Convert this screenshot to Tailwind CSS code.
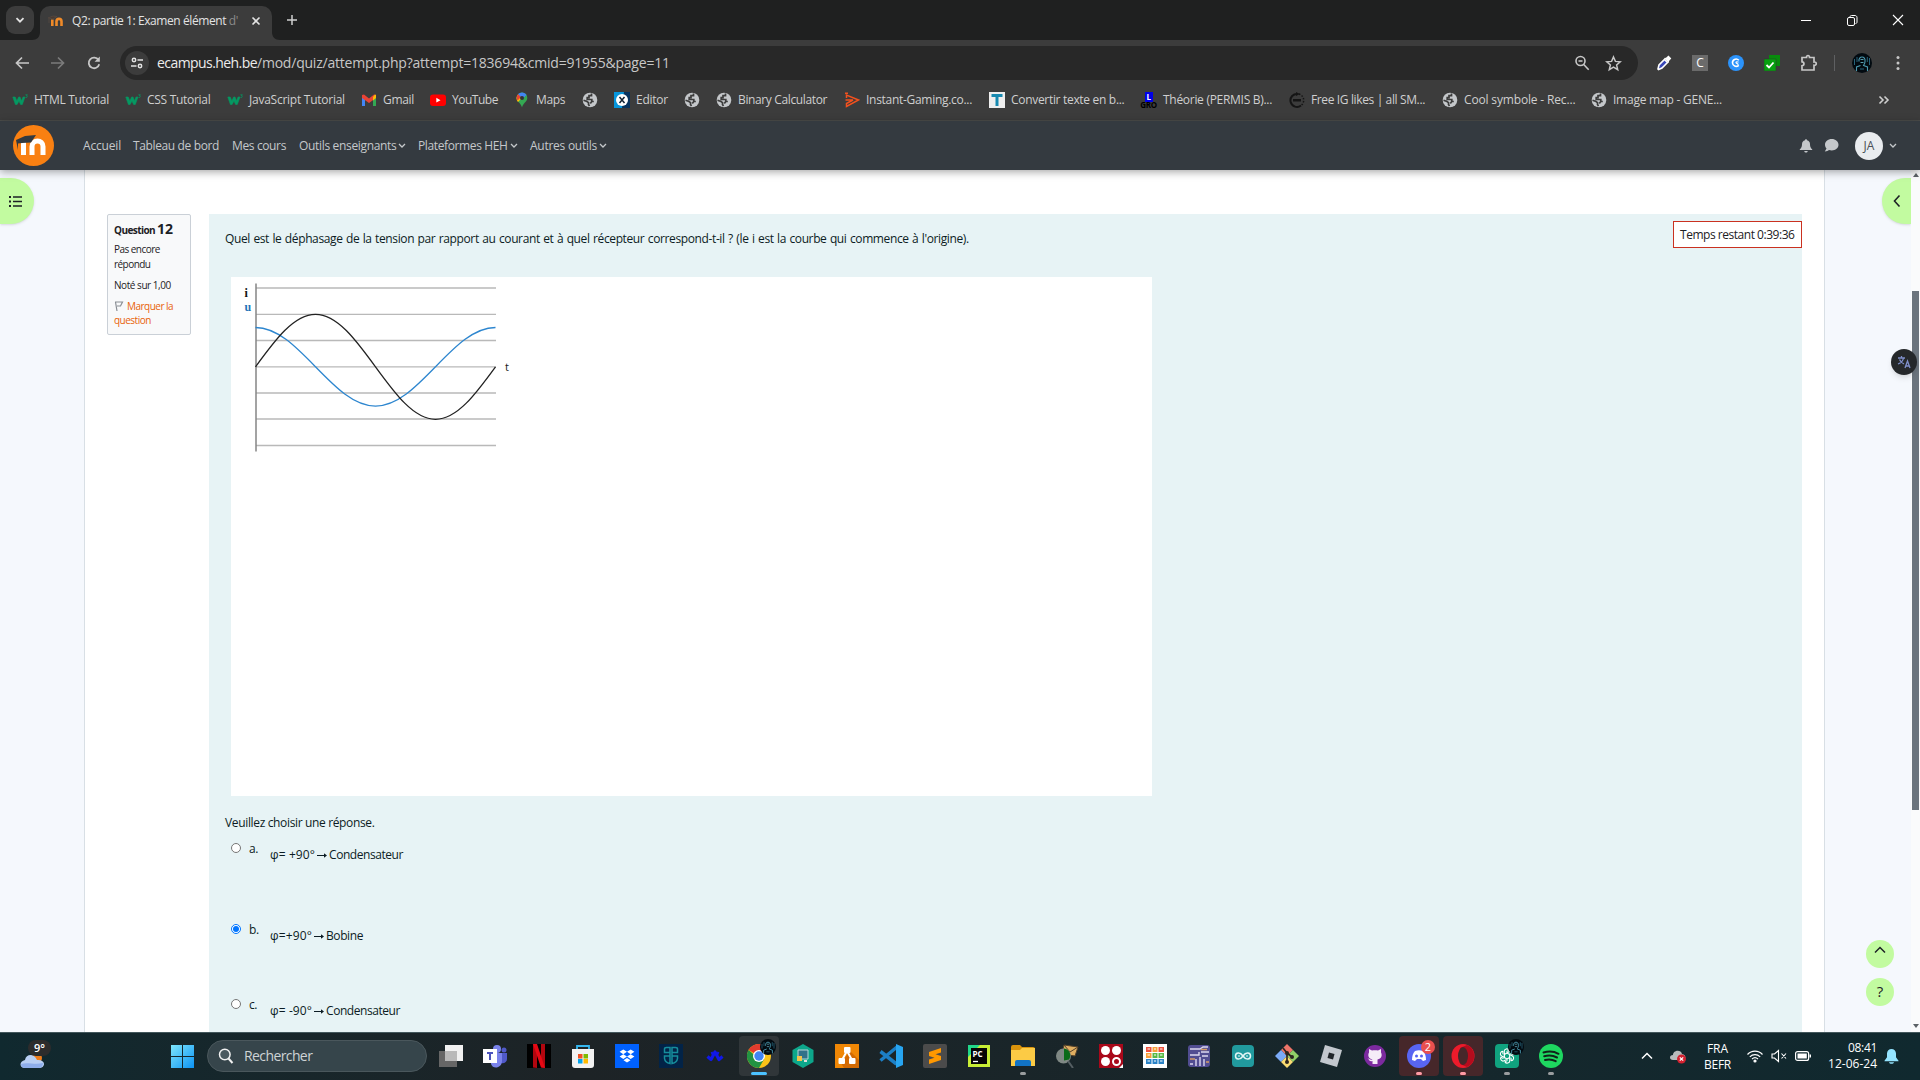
<!DOCTYPE html>
<html lang="fr">
<head>
<meta charset="utf-8">
<title>Q2: partie 1: Examen élément d'</title>
<script src="https://cdn.jsdelivr.net/npm/@tailwindcss/browser@4"></script>
</head>
<body class="flex h-[1080px] w-[1920px] flex-col overflow-hidden bg-white font-['Open_Sans','Noto_Sans',sans-serif] text-[12px] leading-4 whitespace-nowrap text-[#1d2125]">

<svg class="hidden">
  <symbol id="globe" viewBox="0 0 16 16"><circle cx="8" cy="8" r="7.3" fill="#c4c7ca"/><path d="M9.500 1.500v2.200H7v2H5.200v1.800h4.600v2h2M1.500 8.300 5 9.500l1.500 1.200v1.800l1 1.500M9.800 9.500l-1.500 2" fill="none" stroke="#3c3c3c" stroke-width="1.700"/></symbol>
  <symbol id="w3" viewBox="0 0 16 16"><path d="M.8 5h2.400l1.700 4L6.600 5H8l1.600 4L11 5h2L10.300 12.500H8.600L7 9l-1.900 3.500H3.400z" fill="#059862" stroke="#059862" stroke-width=".6"/><path d="M13.400 2.800h2l-1 1.200c1.500 0 1.300 1.900-.8 1.500" fill="none" stroke="#059862" stroke-width=".8"/></symbol>
  <symbol id="down" viewBox="0 0 8 8"><path d="m1 2 3 3 3-3" fill="none" stroke="currentColor" stroke-width="1.300"/></symbol>
  <symbol id="arrow" viewBox="0 0 12 8"><path d="M1 4.500h9" stroke="currentColor" fill="none"/><path d="M8 2.200 11 4.500 8 6.800z" fill="currentColor"/></symbol>
  <symbol id="avatar" viewBox="0 0 20 20"><circle cx="10" cy="10" r="10" fill="#020a10"/><path d="M7 8.500c-1-6 7-6 6 0 0 2-1 3-1.500 4l4 1.500v4M8.500 12.500l-4 1.500v4" fill="none" stroke="#4b9ab0" stroke-width="1.100"/><path d="M8.500 6.500h3M8.500 9.500h3" stroke="#6fc0d4" stroke-width=".8"/><path d="M2.500 6v6M17.500 5v7M5 4v5M15.300 4v5M8 16h4" stroke="#28637a" stroke-width="1"/></symbol>
</svg>

<!-- Tab strip -->
<header class="flex h-10 shrink-0 items-end bg-[#1f2020] text-[#e3e3e3]">
  <div class="mb-1.5 ml-1.5 flex size-7 items-center justify-center rounded-[9px] bg-[#3c3c3c]"><svg class="size-3.5" viewBox="0 0 14 14"><path d="m3.500 5.200 3.500 3.500 3.500-3.500" fill="none" stroke="#e3e3e3" stroke-width="1.800"/></svg></div>
  <div class="relative ml-1.5 flex h-[34px] w-[232px] items-center rounded-t-[10px] bg-[#3c3c3c] pb-[5px] pl-2">
    <svg class="size-4" viewBox="0 0 16 16"><path d="M4.300 13V6.500M8.500 13V8.500c0-3.500 5-3.500 5 0V13" fill="none" stroke="#ef8a29" stroke-width="2.600"/><path d="M0 5 5 3l4 .5-4 2.500zM1 6v4" fill="#4a3a30" stroke="#564a42" stroke-width=".8"/></svg>
    <span class="ml-2 w-[169px] overflow-hidden tracking-[-0.41px]">Q2: partie 1: Examen élément <span class="text-[#8a8a8a]">d'</span></span>
    <svg class="ml-[9px] size-3" viewBox="0 0 12 12"><path d="m2.500 2.500 7 7m0-7-7 7" stroke="#e3e3e3" stroke-width="1.600"/></svg>
    <svg class="absolute bottom-0 -left-2 size-2" viewBox="0 0 8 8"><path d="M8 0v8H0c5 0 8-3 8-8z" fill="#3c3c3c"/></svg>
    <svg class="absolute -right-2 bottom-0 size-2" viewBox="0 0 8 8"><path d="M0 0v8h8C3 8 0 5 0 0z" fill="#3c3c3c"/></svg>
  </div>
  <svg class="mb-3.5 ml-3.5 size-3" viewBox="0 0 12 12"><path d="M6 1v10M1 6h10" stroke="#cfcfcf" stroke-width="1.500"/></svg>
  <div class="mr-4 mb-3.5 ml-auto flex items-center gap-[34px] text-white">
    <svg class="size-3" viewBox="0 0 12 12"><path d="M1 6.500h10" stroke="currentColor"/></svg>
    <svg class="size-3" viewBox="0 0 12 12" fill="none" stroke="currentColor"><rect x="1.500" y="3.500" width="7" height="8" rx="1.500"/><path d="M4 3c0-1 .5-1.500 1.500-1.500H9c1 0 2 .8 2 2V8c0 1-.6 1.500-1.500 1.500"/></svg>
    <svg class="size-3" viewBox="0 0 12 12"><path d="m1 1 10 10m0-10L1 11" stroke="currentColor" stroke-width="1.100"/></svg>
  </div>
</header>

<!-- Address bar -->
<div class="flex h-[46px] shrink-0 items-center bg-[#3c3c3c] text-[#c7c7c7]">
  <svg class="ml-3.5 size-4" viewBox="0 0 16 16"><path d="M15 8H2.500M8 2.500 2.500 8 8 13.500" fill="none" stroke="currentColor" stroke-width="1.700"/></svg>
  <svg class="ml-5 size-4 text-[#7b7b7b]" viewBox="0 0 16 16"><path d="M1 8h12.500M8 2.500 13.500 8 8 13.500" fill="none" stroke="currentColor" stroke-width="1.700"/></svg>
  <svg class="ml-5 size-4" viewBox="0 0 16 16"><path d="M13.200 9.200A5.300 5.300 0 1 1 12.500 5" fill="none" stroke="currentColor" stroke-width="1.800"/><path d="M13.800 1.500v5.200H8.600z" fill="currentColor"/></svg>
  <div class="ml-[18px] flex h-[34px] w-[1518px] items-center rounded-full bg-[#282828] pl-[5px] text-[14px]">
    <div class="flex size-6 items-center justify-center rounded-full bg-[#3c3c3c]"><svg class="size-[14px]" viewBox="0 0 14 14" fill="none" stroke="#e3e3e3" stroke-width="1.500"><circle cx="4" cy="4" r="1.700"/><path d="M7.500 4H13M1 10h5.500"/><circle cx="10" cy="10" r="1.700"/></svg></div>
    <span class="ml-2 tracking-[-0.57px] text-[#ececec]">ecampus.heh.be</span><span class="tracking-[-0.21px]">/mod/quiz/attempt.php?attempt=183694&amp;cmid=91955&amp;page=11</span>
    <svg class="ml-auto size-4" viewBox="0 0 16 16" fill="none" stroke="currentColor" stroke-width="1.600"><circle cx="6.500" cy="6" r="4.500"/><path d="m9.700 9.500 5 5.200M4.500 6h4"/></svg>
    <svg class="mr-4 ml-[15px] size-[17px]" viewBox="0 0 17 17"><path d="m8.500 2 1.900 4.400 4.800.4-3.600 3.200 1.100 4.700-4.200-2.500-4.200 2.500L5.400 10 1.800 6.800l4.800-.4z" fill="none" stroke="currentColor" stroke-width="1.500"/></svg>
  </div>
  <svg class="ml-[18px] size-4" viewBox="0 0 16 16"><path d="m2 14 1-4 5.500-5.500 3 3L6 13l-3.500 1.500z" fill="#3847b8" stroke="#fff" stroke-width="1.600"/><path d="m8 3 2-.2L12.500.6l2.800 2.800L13 6l-.2 2z" fill="#fff"/></svg>
  <div class="ml-5 flex size-4 items-center justify-center bg-[#6b6b6b] text-[12px] text-white">C</div>
  <svg class="ml-5 size-4" viewBox="0 0 16 16"><circle cx="8" cy="8" r="8" fill="#2b93fb"/><path d="M10.800 5.300C8 2.500 4.200 5 4.500 8s3.500 4.500 6.300 2.300" fill="none" stroke="#fff" stroke-width="1.600"/><path d="M10.500 7.300C8.500 6 7.200 7.500 8.500 8.200s2 .8 1.300 2" fill="none" stroke="#fff" stroke-width="1.100"/></svg>
  <svg class="ml-5 size-4" viewBox="0 0 16 16"><path d="M5 0h11v11H5z" fill="#078b0c"/><path d="M0 4h12v12H0z" fill="#07a010" stroke="#2b3a2b" stroke-width=".5"/><path d="m2.500 10 2.500 2.500 4.500-5" fill="none" stroke="#fff" stroke-width="1.800"/></svg>
  <svg class="ml-5 size-[18px]" viewBox="0 0 18 18"><path d="M2 3.500h4.500c-.3-2.600 3.300-2.600 3 0h4.500v4.500c3-.3 3 3.600 0 3.300V16H2v-4.200c2.600-.2 2.600-3.800 0-4z" fill="none" stroke="currentColor" stroke-width="1.700"/></svg>
  <div class="ml-4 h-4 w-px bg-[#5f6062]"></div>
  <svg class="ml-[17px] size-5"><use href="#avatar"/></svg>
  <svg class="ml-[18px] size-4" viewBox="0 0 16 16" fill="currentColor"><circle cx="8" cy="2.500" r="1.500"/><circle cx="8" cy="8" r="1.500"/><circle cx="8" cy="13.500" r="1.500"/></svg>
</div>

<!-- Bookmarks -->
<nav class="flex h-[35px] shrink-0 items-center border-b border-[#4b4c4a] bg-[#3c3c3c] pb-1.5 pl-3 text-[#cfcfcf] [&>div]:flex [&>div]:shrink-0 [&>div]:items-center [&>div]:gap-1.5 [&_svg]:size-4 [&_svg]:shrink-0">
  <div class="w-[113px] tracking-[-0.29px]"><svg><use href="#w3"/></svg>HTML Tutorial</div>
  <div class="w-[102px] tracking-[-0.29px]"><svg><use href="#w3"/></svg>CSS Tutorial</div>
  <div class="w-[134px] tracking-[-0.25px]"><svg><use href="#w3"/></svg>JavaScript Tutorial</div>
  <div class="w-[69px] tracking-[-0.31px]"><svg viewBox="0 0 16 16"><path d="M1 3v11h3V7z" fill="#4285f4"/><path d="M15 3v11h-3V7z" fill="#34a853"/><path d="m1 3 2-.5 5 4 5-4 2 .5v3L8 11 1 6z" fill="#ea4335"/><path d="m12 5 2-2.500 1 .5v3l-3 2.500z" fill="#fbbc04"/></svg>Gmail</div>
  <div class="w-[84px] tracking-[-0.48px]"><svg viewBox="0 0 16 16"><rect y="2.500" width="16" height="11.500" rx="3" fill="#f00"/><path d="m6.300 5.800 4.200 2.400-4.200 2.400z" fill="#fff"/></svg>YouTube</div>
  <div class="w-[68px] tracking-[-0.38px]"><svg viewBox="0 0 16 16"><path d="M8 .5a5.500 5.500 0 0 0-5.300 5.500C2.700 10 7 11 8 15.500 9 11 13.300 10 13.300 6A5.300 5.300 0 0 0 8 .5z" fill="#34a853"/><path d="M4 2.500 11.500 2 8 6 4 10C1.500 7 2.500 4 4 2.500z" fill="#fbbc04"/><path d="M8 .5c2 0 3.500 1 4.500 2.500L8 7.500 4 2.300C5 1.200 6.500.5 8 .5z" fill="#4285f4"/><path d="M4 2.300 7 5 3.500 8.500C2.300 6 2.800 3.800 4 2.300z" fill="#ea4335"/><circle cx="8" cy="5.900" r="2" fill="#333"/></svg>Maps</div>
  <div class="w-8"><svg><use href="#globe"/></svg></div>
  <div class="w-[70px] tracking-[-0.24px]"><svg viewBox="0 0 16 16"><path d="M0 0h16v16H0z" fill="#0796dc"/><path d="M10 0h6v16H8z" fill="#07335f"/><circle cx="8" cy="8" r="6" fill="#fff"/><path d="m5.500 5 5 6m0-6-5 6" stroke="#123" stroke-width="1.500"/></svg>Editor</div>
  <div class="w-8"><svg><use href="#globe"/></svg></div>
  <div class="w-[128px] tracking-[-0.37px]"><svg><use href="#globe"/></svg>Binary Calculator</div>
  <div class="w-[145px] tracking-[-0.29px]"><svg viewBox="0 0 16 16"><path d="M2.500 6V3l12 5L2.500 14.500v-3L9 8H1.500" fill="none" stroke="#f4511e" stroke-width="1.500"/><path d="M1 .5h3v1.500H1z" fill="#f4511e"/></svg>Instant-Gaming.co...</div>
  <div class="w-[151px] tracking-[-0.31px]"><svg viewBox="0 0 16 16"><path d="M0 0h16v16H0z" fill="#eee"/><path d="M2.500 3.500h11M8 3.500v10.500" stroke="#1789b0" stroke-width="3"/></svg>Convertir texte en b...</div>
  <div class="w-[149px] tracking-[-0.29px]"><span class="flex h-4 w-[17px] flex-col items-center font-bold"><span class="h-[10px] w-2 bg-[#0000e8] text-center text-[8px] leading-[10px] text-white">L</span><span class="text-[8px] leading-[6px] text-black">GRO</span></span>Théorie (PERMIS B)...</div>
  <div class="w-[153px] tracking-[-0.37px]"><svg viewBox="0 0 16 16"><path d="M9 2a6.500 6.500 0 1 0 3 11.500" fill="none" stroke="#151515" stroke-width="2"/><path d="M10 2a6.500 6.500 0 0 1 2 11.500" fill="none" stroke="#151515" stroke-width="1.500" stroke-dasharray="1.500 1.500"/><path d="m7 0 4 2-4 2zM4 7h8v2.500H4z" fill="#151515"/></svg>Free IG likes | all SM...</div>
  <div class="w-[149px] tracking-[-0.16px]"><svg><use href="#globe"/></svg>Cool symbole - Rec...</div>
  <div class="w-[286px] tracking-[-0.23px]"><svg><use href="#globe"/></svg>Image map - GENE...</div>
  <div><svg viewBox="0 0 16 16"><path d="m2.500 4.500 3.500 3.500-3.500 3.500m5-7L11 8l-3.500 3.500" fill="none" stroke="currentColor" stroke-width="1.600"/></svg></div>
</nav>

<!-- Site navigation -->
<nav class="z-10 flex h-[49px] shrink-0 items-center bg-[#343a40] pl-[13px] text-[#c5c8cb] shadow-[0_2px_8px_rgba(0,0,0,0.35)] [&_svg.c]:size-2">
  <svg class="size-[41px]" viewBox="0 0 41 41"><circle cx="20.500" cy="20.500" r="20.500" fill="#f98012"/><path d="M10.500 30V17M19 30v-8.500c0-7.500 11-7.500 11 0V30" fill="none" stroke="#fff" stroke-width="5"/><path d="m3 15 9-4 11-1-5 7.500-9 .5-4 .5v6.500z" fill="#333a40"/></svg>
  <span class="ml-[29px] w-[50px] tracking-[-0.18px]">Accueil</span>
  <span class="w-[99px] tracking-[-0.37px]">Tableau de bord</span>
  <span class="w-[67px] tracking-[-0.37px]">Mes cours</span>
  <span class="w-[99px] tracking-[-0.33px]">Outils enseignants</span><svg class="c"><use href="#down"/></svg>
  <span class="ml-3 w-[92px] tracking-[-0.38px]">Plateformes HEH</span><svg class="c"><use href="#down"/></svg>
  <span class="ml-3 w-[69px] tracking-[-0.26px]">Autres outils</span><svg class="c"><use href="#down"/></svg>
  <svg class="ml-auto size-[14px]" viewBox="0 0 14 14" fill="#c5c8cb"><path d="M7 .3c.6 0 1 .4 1 1 2 .5 3 2 3 4 0 2.500.8 4 2.200 5v.7H.8v-.7C2.200 9.300 3 7.800 3 5.300c0-2 1-3.500 3-4 0-.6.400-1 1-1zM5.300 12h3.400c0 2-3.400 2-3.400 0z"/></svg>
  <svg class="ml-[11px] size-[15px]" viewBox="0 0 15 15"><path d="M7.800 1C3.800 1 1 3.500 1 6.700c0 1.500.6 2.800 1.500 3.800L.8 13.500c2 0 3.300-.6 4.200-1.400C10 13.500 14.500 11 14.500 6.800 14.500 3.500 11.500 1 7.800 1z" fill="#c5c8cb"/></svg>
  <div class="ml-4 flex size-7 items-center justify-center rounded-full bg-[#e9ecef] text-[#495057]">JA</div>
  <svg class="mr-[23px] ml-1.5 size-2"><use href="#down"/></svg>
</nav>

<!-- Page -->
<main class="relative flex min-h-0 flex-1 bg-[#f5f8fd]">
  <div class="w-[84px] shrink-0 pt-2">
    <div class="flex h-[46px] w-[34px] items-center rounded-r-full bg-[#c2fba0] pl-2 shadow-sm"><svg class="size-[15px]" viewBox="0 0 15 15"><path d="M5 3h9M5 7.500h9M5 12h9" stroke="#1d2125" stroke-width="1.500"/><path d="M1 3h2M1 7.500h2M1 12h2" stroke="#1d2125" stroke-width="2"/></svg></div>
  </div>
  <div class="flex w-[1741px] shrink-0 items-start overflow-hidden border-x border-[#d8dfe5] bg-white pt-11 pl-[22px]">
    <aside class="flex h-[121px] w-[84px] shrink-0 flex-col rounded-[2px] border border-[#cad0d7] bg-[#f8f9fa] pl-1.5 text-[10px] leading-[15px]">
      <h3 class="mt-1 flex items-baseline leading-[19px] font-bold"><span class="w-[43px] text-[10px] tracking-[-0.57px]">Question</span><span class="text-[14px]">12</span></h3>
      <p class="mt-0.5 tracking-[-0.54px]">Pas encore<br>répondu</p>
      <p class="mt-[6px] tracking-[-0.45px]">Noté sur 1,00</p>
      <p class="mt-[6px] leading-[14px] tracking-[-0.51px] text-[#e8630a]"><svg class="mr-[3px] inline size-2.5 align-[-1px]" viewBox="0 0 10 10"><path d="M1 1h7.500L6.500 5H3M1.500 1l1.500 9" fill="none" stroke="#8a8f94" stroke-width="1.200"/></svg>Marquer la<br>question</p>
    </aside>
    <section class="ml-[18px] h-[830px] w-[1593px] shrink-0 bg-[#e7f3f5] pl-4 text-[#0c1c24]">
      <div class="flex items-start">
        <p class="mt-[17px] tracking-[-0.38px] [word-spacing:0.7px]">Quel est le déphasage de la tension par rapport au courant et à quel récepteur correspond-t-il ? (le i est la courbe qui commence à l'origine).</p>
        <div class="mt-[7px] ml-auto flex h-[27px] w-[129px] items-center border border-[#ca3120] bg-white pl-[6px] tracking-[-0.47px] text-[#1d2125]">Temps restant 0:39:36</div>
      </div>
      <div class="mt-[29px] ml-1.5 h-[519px] w-[921px] bg-white">
        <svg class="h-[200px] w-[320px]" viewBox="0 0 320 200" fill="none">
          <path d="M25 11h240M25 37.300h240M25 63.500h240M25 89.800h240M25 116h240M25 142h240M25 168.500h240" stroke="#b9b9b9" stroke-width="1.300"/>
          <path d="M25 6.500v168" stroke="#858585" stroke-width="1.500"/>
          <path d="M24.500 50.500C46.200 50.500 64.900 69.700 84.500 89.800 104.100 110 122.800 129.100 144.500 129.100 166.200 129.100 184.900 110 204.500 89.800 224.100 69.700 242.800 50.500 264.500 50.500" stroke="#2d86cf" stroke-width="1.300"/>
          <path d="M24.500 89.800C44.100 62.900 62.800 37.300 84.500 37.300 106.200 37.300 124.900 62.900 144.500 89.800 164.100 116.700 182.800 142.300 204.500 142.300 226.200 142.300 244.900 116.700 264.500 89.800" stroke="#222" stroke-width="1.300"/>
          <text x="13.500" y="19.500" fill="#111" class="font-['Liberation_Serif'] text-[12px] font-bold">i</text>
          <text x="13.500" y="34" fill="#1e73b8" class="font-['Liberation_Serif'] text-[12px] font-bold">u</text>
          <text x="274" y="94" fill="#222" class="font-['Open_Sans'] text-[11px]">t</text>
        </svg>
      </div>
      <p class="mt-[19px] tracking-[-0.35px]">Veuillez choisir une réponse.</p>
      <div class="mt-[10px] flex h-[81px] items-start pl-1.5"><div class="mt-0.5 size-[10px] rounded-full border border-[#767676] bg-white"></div><span class="ml-2 w-[21px] tracking-[-0.4px]">a.</span><span class="mt-1.5 flex items-center tracking-[0.1px]">φ= +90°<svg class="mx-px h-2 w-3"><use href="#arrow"/></svg><span class="tracking-[-0.44px]">Condensateur</span></span></div>
      <div class="flex h-[75px] items-start pl-1.5"><div class="mt-0.5 flex size-[10px] items-center justify-center rounded-full border border-[#0075ff] bg-white"><span class="size-1.5 rounded-full bg-[#0075ff]"></span></div><span class="ml-2 w-[21px] tracking-[-0.4px]">b.</span><span class="mt-1.5 flex items-center tracking-[0.14px]">φ=+90°<svg class="mx-px h-2 w-3"><use href="#arrow"/></svg><span class="tracking-[-0.41px]">Bobine</span></span></div>
      <div class="flex h-[24px] items-start pl-1.5"><div class="mt-0.5 size-[10px] rounded-full border border-[#767676] bg-white"></div><span class="ml-2 w-[21px] tracking-[-0.4px]">c.</span><span class="mt-1.5 flex items-center tracking-[0.1px]">φ= -90°<svg class="mx-px h-2 w-3"><use href="#arrow"/></svg><span class="tracking-[-0.44px]">Condensateur</span></span></div>
    </section>
  </div>
  <div class="flex flex-1 flex-col items-end pt-2">
    <div class="flex h-[46px] w-[29px] items-center rounded-l-full bg-[#c2fba0] pl-2.5 shadow-sm"><svg class="h-3.5 w-3" viewBox="0 0 12 14"><path d="M7.500 1.500 2.500 7l5 5.500" fill="none" stroke="#1d2125" stroke-width="1.600"/></svg></div>
    <div class="mt-auto mr-[17px] mb-[26px] flex flex-col gap-[10px] text-[#1d2125]">
      <div class="flex size-7 justify-center rounded-full bg-[#c2fba0] pt-1.5"><svg class="h-[8px] w-3" viewBox="0 0 12 8"><path d="M1 6.500 6 1.500l5 5" fill="none" stroke="currentColor" stroke-width="1.500"/></svg></div>
      <div class="flex size-7 items-center justify-center rounded-full bg-[#c2fba0] pb-0.5 text-[15px] font-medium">?</div>
    </div>
  </div>
  <div class="flex w-[9px] shrink-0 flex-col items-center bg-[#fafbfc]">
    <svg class="mt-[3px] h-1 w-1.5" viewBox="0 0 6 4"><path d="m0 4 3-4 3 4z" fill="#5c6166"/></svg>
    <div class="mt-[114px] h-[519px] w-[7px] bg-[#6b747d]"></div>
    <svg class="mt-auto mb-1 h-1 w-1.5" viewBox="0 0 6 4"><path d="m0 0 3 4 3-4z" fill="#5c6166"/></svg>
  </div>
  <div class="absolute top-[179px] right-[3px] flex size-[26px] items-center justify-center rounded-full bg-[#25282b] shadow-md"><svg class="size-[14px]" viewBox="0 0 14 14" fill="none" stroke="#7f8fca" stroke-width="1.300"><path d="M1 3h7M4.500 1v2M6.500 3c-.5 3-2.500 5-5.500 6M2.500 4.500C3.500 7 5 8 7 9M8 13l2.500-7 2.500 7M9 11h3.200"/></svg></div>
</main>

<!-- Taskbar -->
<footer class="flex h-12 shrink-0 items-center border-t border-[#43575c] bg-linear-to-r from-[#10292f] via-[#1d2326] via-30% to-[#10292f] pb-px text-white">
  <div class="relative ml-5 size-7"><svg class="absolute top-2 left-0 h-5 w-6" viewBox="0 0 24 20"><circle cx="17" cy="8" r="5" fill="#ef7c1a"/><path d="M5 18c-6 0-6-7 0-8 1-6 9-7 12 0 9-1 9 8 2 8z" fill="#b8cff4"/><path d="M1 14c5-2 15 1 22-1 0 3-2 5-4 5H5c-2 0-4-1-4-4z" fill="#8eaeeb"/></svg><span class="absolute -top-[2px] left-2 flex h-4 w-[23px] items-center justify-center rounded-full bg-[#2d2c2c] text-[11px] font-semibold">9°</span></div>
  <svg class="ml-[123px] size-[23px]" viewBox="0 0 23 23"><defs><linearGradient id="win" x2="1" y2="1"><stop stop-color="#7ee6fc"/><stop offset="1" stop-color="#0c93f4"/></linearGradient></defs><path d="M0 0h11v11H0zM12 0h11v11H12zM0 12h11v11H0zM12 12h11v11H12z" fill="url(#win)"/></svg>
  <div class="ml-[13px] flex h-8 w-[220px] items-center rounded-full border border-[#4a575c] bg-[#36454b] pl-[10px] text-[14px] tracking-[-0.6px] text-[#ced3d5]"><svg class="mr-[10px] size-4" viewBox="0 0 16 16"><circle cx="6.800" cy="6.500" r="5.300" fill="#4b5a60" stroke="#f1f1f1" stroke-width="1.500"/><path d="m10.500 10.500 4 4.500" stroke="#f1f1f1" stroke-width="2"/></svg>Rechercher</div>
  <div class="ml-0.5 flex [&>div]:relative [&>div]:mx-0.5 [&>div]:flex [&>div]:h-10 [&>div]:w-10 [&>div]:shrink-0 [&>div]:items-center [&>div]:justify-center [&>div]:rounded [&>div>svg]:size-6">
    <div><svg viewBox="0 0 24 24"><path d="M6 1h18v16H6z" fill="#f1f1f1"/><path d="M0 7h18v16H0z" fill="#666"/><path d="M6 7h12v10H6z" fill="#b9b9b9"/></svg></div>
    <div><svg viewBox="0 0 24 24"><circle cx="14" cy="5" r="4" fill="#7b83eb"/><circle cx="21" cy="6" r="2.500" fill="#5059c9"/><path d="M16 9h8v6c0 3-3 5-6 4z" fill="#5059c9"/><path d="M8 9h11v8c0 7-9 9-11 3z" fill="#7b83eb"/><path d="M0 5h14v14H0z" fill="#fff"/><path d="M4 9h6M7 9v7" stroke="#4b53bc" stroke-width="2"/></svg></div>
    <div><svg viewBox="0 0 24 24"><path d="M0 0h24v24H0z"/><path d="M6 0h4v24l-4-.4zM14 0h4v24l-4-1z" fill="#b1060f"/><path d="M6 0h4l8 24-4-.5z" fill="#e50914"/></svg></div>
    <div><svg viewBox="0 0 24 24"><path d="M6 8V2h12v6" fill="none" stroke="#35b6ee" stroke-width="1.800"/><path d="M1 5h22v16q0 3-3 3H4q-3 0-3-3z" fill="#f2f2f2"/><path d="M7 10h4.500v4.500H7z" fill="#f25022"/><path d="M12.500 10H17v4.500h-4.500z" fill="#7fba00"/><path d="M7 15h4.500v4.500H7z" fill="#00a4ef"/><path d="M12.500 15H17v4.500h-4.500z" fill="#ffb900"/></svg></div>
    <div><svg viewBox="0 0 24 24"><path d="M0 0h24v24H0z" fill="#0061fe"/><path d="m8.300 5.500 3.700 2.300-3.700 2.400-3.700-2.400zm7.400 0 3.700 2.300-3.700 2.400L12 7.800zM8.300 10.200l3.700 2.400L8.300 15l-3.700-2.400zm7.400 0 3.700 2.400-3.700 2.400-3.700-2.400zM12 13.900l3.500 2.300-3.500 2.300-3.500-2.300z" fill="#fff"/></svg></div>
    <div><svg viewBox="0 0 24 24"><path d="M0 0h24v24H0z" fill="#022347"/><path d="M11 8.500H5.500V5q0-1.500 2-1.500H11v16q-5-1-5.500-5V12H11M13 8.500h5.500V5q0-1.500-2-1.500H13v16q5-1 5.500-5V12H13" fill="none" stroke="#168d9c" stroke-width="1.500"/></svg></div>
    <div><svg viewBox="0 0 24 24"><path d="m4.500 12.500 3.500 3 4-7.500 4 7.500 3.500-3" fill="none" stroke="#1018e8" stroke-width="3.200" stroke-linejoin="round"/><path d="m8.500 8 1.500 3M15.500 8 14 11" stroke="#1018e8" stroke-width="2"/></svg></div>
    <div class="bg-[#303639]"><svg viewBox="0 0 24 24"><circle cx="12" cy="12" r="12" fill="#fbc318"/><path d="M12 12 1.600 6a12 12 0 0 1 20.800 0z" fill="#e33b2e"/><path d="M1.600 6A12 12 0 0 0 12 24l5.200-9H12z" fill="#229342"/><circle cx="12" cy="12" r="6" fill="#fff"/><circle cx="12" cy="12" r="4.700" fill="#4285f4"/></svg><span class="absolute top-[3px] right-[3px] size-4"><svg class="size-4"><use href="#avatar"/></svg></span><span class="absolute bottom-px h-[3px] w-4 rounded-full bg-[#4cc2ff]"></span></div>
    <div><svg viewBox="0 0 24 24"><path d="m12 0 10.500 6v12L12 24 1.500 18V6z" fill="#0da78b"/><path d="M7 6h10v9H7z" fill="#32718a" stroke="#b7d5d8"/><path d="M6 12h5v5H6z" fill="#f3c34b"/><path d="M13 16h3v2h-3z" fill="#ddd"/></svg></div>
    <div><svg viewBox="0 0 24 24"><path d="M0 0h24v24H0z" fill="#f08705"/><path d="m15 7 9 9v8H9l-3-5z" fill="#d36a02"/><path d="m12 7-5 9m5-9 5 9" stroke="#fff" stroke-width="2"/><rect x="9" y="3" width="6.500" height="6" rx="1" fill="#fff"/><rect x="3.500" y="14" width="6.500" height="6" rx="1" fill="#fff"/><rect x="14" y="14" width="6.500" height="6" rx="1" fill="#fff"/></svg></div>
    <div><svg viewBox="0 0 24 24"><path d="m1.500 7.500 16 12.500M1.500 16.500 18 3" stroke="#1c7fc6" stroke-width="3.500"/><path d="m17 0 7 3v18l-7 3z" fill="#27a5f1"/></svg></div>
    <div><svg viewBox="0 0 24 24"><rect width="24" height="24" rx="2" fill="#4b4b4b"/><path d="m6 8 12-4v4.500L12.500 10.300 18 12v4L6 20v-4.500l5.500-1.800L6 12z" fill="#ff9800"/></svg></div>
    <div><svg viewBox="0 0 24 24"><path d="M1 1h22v22H1z" fill="#c8ee35"/><path d="M1 1h12L1 13z" fill="#21d789"/><path d="M4 4h16v16H4z" fill="#060606"/><path d="M6 17.500h5" stroke="#fff" stroke-width="1.300"/><text x="5.500" y="12.500" fill="#fff" class="font-['Open_Sans'] text-[8px] font-bold">PC</text></svg></div>
    <div><svg viewBox="0 0 24 24"><path d="M0 3q0-2 2-2h7l2 2h11q2 0 2 2v4H0z" fill="#d9930c"/><path d="M0 6h9l2-2h13v18H0z" fill="#fccb45"/><path d="M4 22v-4q0-2 2-2h12q2 0 2 2v4z" fill="#1273c4"/></svg><span class="absolute bottom-px h-[3px] w-1.5 rounded-full bg-[#9a9d9f]"></span></div>
    <div><svg viewBox="0 0 24 24"><path d="m9 1 14 2-3 9-13-2z" fill="#dfae61" stroke="#54412a"/><path d="m9 1 6 7 8-5" fill="none" stroke="#54412a"/><circle cx="8.500" cy="12" r="7.500" fill="#7f8884"/><path d="M9 4.500a7 7 0 0 1 5 11l-5 1z" fill="#0a6b18"/><path d="m13 17 5 7" stroke="#555f63" stroke-width="2"/></svg></div>
    <div><svg viewBox="0 0 24 24"><path d="M0 0h24v24H0z" fill="#a9081a"/><g fill="#fff"><circle cx="6.500" cy="6.500" r="4.500"/><circle cx="17.500" cy="6.500" r="4.500"/><circle cx="6.500" cy="17.500" r="4.500"/></g><circle cx="17.500" cy="17.500" r="3.500" fill="none" stroke="#fff" stroke-width="2"/><path d="m20 24 4-4v4z" fill="#fff"/></svg></div>
    <div><svg viewBox="0 0 24 24"><path d="M0 0h24v24H0z" fill="#fff"/><path d="M3 3h5.500v5H3zM15.500 3H21v5h-5.500z" fill="#f0523d"/><path d="M9.500 3h5v5h-5zM3 9h5.500v5H3z" fill="#f9a13a"/><path d="M9.500 9h5v5h-5zM15.500 9H21v5h-5.500z" fill="#59b948"/><path d="M3 15h5.500v5H3zM9.500 15h5v5h-5zM15.500 15H21v5h-5.500z" fill="#2b83c6"/><path d="M4.500 5h2.500M11 5h2M17 5h2.500M4.500 11h2.500M11 11h2M17 11h2.500M4.500 17h2.500M11 17h2M17 17h2.500" stroke="#fff"/></svg></div>
    <div><svg viewBox="0 0 24 24"><rect x="1" y="1" width="22" height="22" rx="3" fill="#514d91"/><path d="M3 5h10l3-2h5M3 11h9V8M14 8h8M9 15v7M13 13v9M17 15v7M3 20h3M15 12h6" fill="none" stroke="#dcd8ee" stroke-width="1.400"/><path d="M3 15h5M14 5.500h6M19 18h3" stroke="#d49c66" stroke-width="1.400"/></svg></div>
    <div><svg viewBox="0 0 24 24"><rect x="1" y="1" width="22" height="22" rx="4" fill="#219a9e"/><path d="M12 12C9 7.500 4.500 8.500 4.500 12s4.500 4.500 7.500 0 7.500-3.500 7.500 0-4.500 4.500-7.500 0z" fill="none" stroke="#e2f5f5" stroke-width="1.500"/><path d="M7 12h2M15 12h2" stroke="#e2f5f5"/></svg></div>
    <div><svg viewBox="0 0 24 24"><path d="m12 0 6 6-6 6-6-6z" fill="#ee7469"/><path d="m6 6 6 6-6 6-6-6z" fill="#7baaf7"/><path d="m18 6 6 6-6 6-6-6z" fill="#91cf68"/><path d="m12 12 6 6-6 6-6-6z" fill="#fbdc72"/><path d="M8 4l4 5v9M12 9l5 4" fill="none" stroke="#2d2520" stroke-width="1.700"/><circle cx="12" cy="9" r="2" fill="#2d2520"/><circle cx="17" cy="13" r="2" fill="#2d2520"/><circle cx="12" cy="18" r="2" fill="#2d2520"/></svg></div>
    <div><svg viewBox="0 0 24 24"><path d="m6 1 17 5-5 17-17-5z" fill="#c3c8ce"/><path d="m10 8.500 5.500 1.500-1.500 5.500L8.500 14z" fill="#202529"/></svg></div>
    <div><svg viewBox="0 0 24 24"><circle cx="12" cy="12" r="11" fill="#7c2a9f"/><path d="M9.500 20v-3c-4 1-3-2-5-2.500 2-.5 2.500 2 5 1-4-1-5-4-3.500-7V5l3 1.500c2-.5 4-.5 6 0L18 5v3.500c1.500 3 .5 6-3.500 7V20z" fill="#f5ecf8"/></svg></div>
    <div class="bg-[#46272a]"><svg viewBox="0 0 24 24"><circle cx="12" cy="12" r="12" fill="#5865f2"/><path d="M8 7c3-1 5-1 8 0 2 2 3 5 3 9l-3 1-2-2h-4l-2 2-3-1c0-4 1-7 3-9z" fill="#fff"/><circle cx="9.500" cy="12" r="1.500" fill="#5865f2"/><circle cx="14.500" cy="12" r="1.500" fill="#5865f2"/></svg><span class="absolute top-1 right-1 flex size-[14px] items-center justify-center rounded-full bg-[#e94f4f] text-[11px]">2</span><span class="absolute bottom-px h-[3px] w-1.5 rounded-full bg-[#ff9ba5]"></span></div>
    <div class="bg-[#46272a]"><svg viewBox="0 0 24 24"><ellipse cx="12" cy="12" rx="11.500" ry="12" fill="#ed1b2b"/><path d="M16 1a12 12 0 0 1 0 22L9 20V4z" fill="#b50c1d"/><ellipse cx="12" cy="12" rx="5" ry="9" fill="#46272a"/></svg><span class="absolute bottom-px h-[3px] w-1.5 rounded-full bg-[#ff9ba5]"></span></div>
    <div><svg viewBox="0 0 24 24"><rect width="24" height="24" rx="4" fill="#10a37f"/><g fill="none" stroke="#fff" stroke-width="1.100"><path id="petal" d="M12 9 9.300 10.500V7.300c0-2.700 3.500-3.200 4.700-1.200l-2.500 1.500"/><use href="#petal" transform="rotate(60 12 12)"/><use href="#petal" transform="rotate(120 12 12)"/><use href="#petal" transform="rotate(180 12 12)"/><use href="#petal" transform="rotate(240 12 12)"/><use href="#petal" transform="rotate(300 12 12)"/></g></svg><span class="absolute top-[3px] right-[3px] size-4"><svg class="size-4"><use href="#avatar"/></svg></span><span class="absolute bottom-px h-[3px] w-1.5 rounded-full bg-[#9a9d9f]"></span></div>
    <div><svg viewBox="0 0 24 24"><circle cx="12" cy="12" r="12" fill="#1ed760"/><path d="M4.500 8.500c5-1.500 11-1 15 1.300M5.200 12.300c4.500-1.300 9-.8 12.800 1.200M6 16c3.500-1 7.500-.6 10.700 1.200" fill="none" stroke="#11221a" stroke-width="2" stroke-linecap="round"/></svg><span class="absolute bottom-px h-[3px] w-1.5 rounded-full bg-[#9a9d9f]"></span></div>
  </div>
  <svg class="ml-[68px] h-2 w-3" viewBox="0 0 12 8"><path d="m1 6.500 5-5 5 5" fill="none" stroke="#fff" stroke-width="1.500"/></svg>
  <svg class="ml-[17px] h-4 w-4" viewBox="0 0 16 16"><path d="M3 12c-4 0-4-5 0-5 0-5 8-6 9-1 5 1 4 6 0 6z" fill="#b8bbbc"/><circle cx="11.500" cy="11" r="4.500" fill="#d32130"/><path d="m9.800 9.300 3.400 3.400m0-3.400-3.400 3.400" stroke="#fff" stroke-width="1.200"/></svg>
  <div class="ml-[17px] w-[29px] pt-px text-center"><p class="tracking-[-0.06px]">FRA</p><p class="tracking-[-0.26px]">BEFR</p></div>
  <svg class="ml-[15px] size-4" viewBox="0 0 16 16" fill="none" stroke="#fff" stroke-width="1.200"><path d="M.5 6.500c4-4.500 11-4.500 15 0M2.800 8.800c3-3 7.400-3 10.400 0M5 11c2-1.800 4-1.800 6 0"/><circle cx="8" cy="13" r="1" fill="#fff"/></svg>
  <svg class="ml-2 size-4" viewBox="0 0 16 16" fill="none" stroke="#fff" stroke-width="1.100"><path d="M1 6h2.500L7.500 2.500v11L3.500 10H1zM10.500 5.500l4.500 5m0-5-4.500 5"/></svg>
  <svg class="ml-2 h-3 w-4" viewBox="0 0 16 12"><rect x=".6" y="1.600" width="13" height="8.800" rx="2" fill="none" stroke="#fff" stroke-width="1.200"/><path d="M2.500 3.500h9.300v5H2.500zM14.500 4.500H16v3h-1.500z" fill="#fff"/></svg>
  <div class="mr-[7px] ml-auto text-right"><p class="tracking-[-0.32px]">08:41</p><p>12-06-24</p></div>
  <svg class="mr-[21px] size-[15px]" viewBox="0 0 15 15" fill="#94e4ff"><path d="M7.500 0C10 0 12 2 12 4.500v3.800l2.500 3.400v.6H.5v-.6L3 8.300V4.500C3 2 5 0 7.500 0zM5 13.300h5c-.5 2-4.500 2-5 0z"/></svg>
</footer>
</body>
</html>
